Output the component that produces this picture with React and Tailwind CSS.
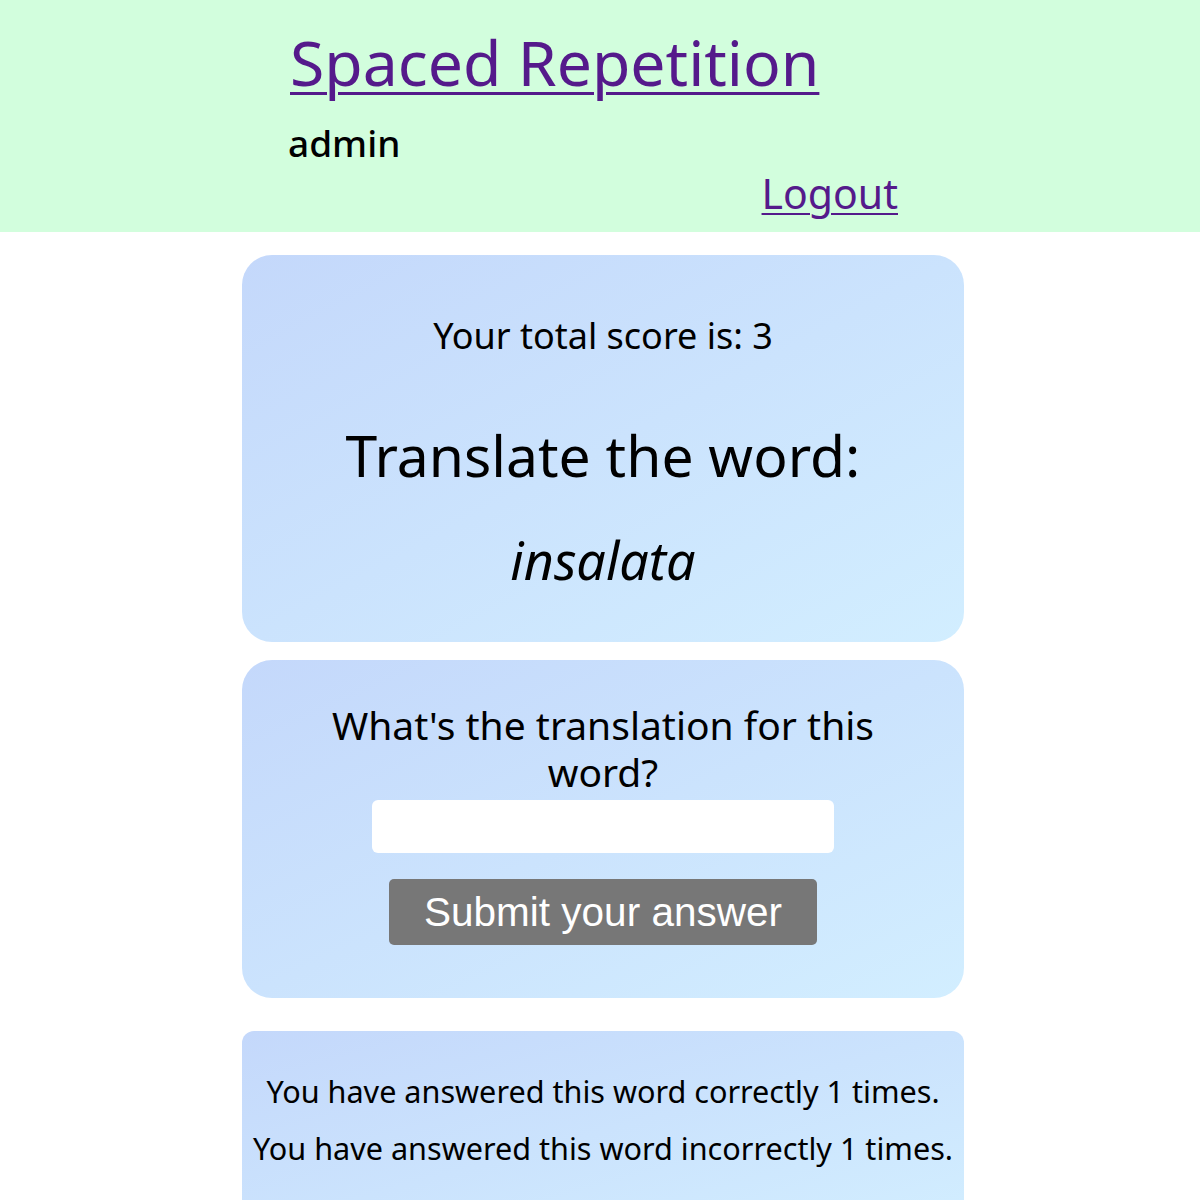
import React, { useState } from 'react';

const App = () => {
  const [answer, setAnswer] = useState('');

  return (
    <div className="min-h-[1200px] bg-white font-['Noto_Sans',sans-serif] text-black">
      <header className="h-[232px] bg-[#d2fedd] pl-[290px] pt-[22px]">
        <h1 className="text-[62.5px] leading-[80px]">
          <a href="#" className="text-[#551a8b] underline decoration-[3px] underline-offset-[6px]">
            Spaced Repetition
          </a>
        </h1>
        <div className="mt-[18px] -ml-[2px] text-[37px] leading-[46px] font-medium">admin</div>
        <div className="w-[608px] mt-[2px] flex justify-end text-[41px] leading-[50px]">
          <a href="#" className="text-[#551a8b] underline decoration-[2px] underline-offset-[4px]">
            Logout
          </a>
        </div>
      </header>

      <main className="w-[722px] ml-[242px] pt-[23px] flex flex-col">
        <section className="h-[387px] rounded-[30px] bg-gradient-to-br from-[#c4d8fb] to-[#d2eeff] text-center pt-[60px]">
          <p className="text-[36px] leading-[42px]">Your total score is: 3</p>
          <h2 className="mt-[63px] text-[57px] leading-[70px]">Translate the word:</h2>
          <p className="mt-[38px] text-[52px] leading-[64px] italic">insalata</p>
        </section>

        <section className="mt-[18px] h-[338px] rounded-[30px] bg-gradient-to-br from-[#c4d8fb] to-[#d2eeff] flex flex-col items-center pt-[41px]">
          <h3 className="w-[600px] text-center text-[39px] leading-[47px]">
            What's the translation for this word?
          </h3>
          <input
            type="text"
            value={answer}
            onChange={(e) => setAnswer(e.target.value)}
            className="mt-[5px] w-[462px] h-[53px] rounded-[6px] bg-white outline-none px-3 text-[24px]"
          />
          <button className="mt-[26px] w-[428px] h-[66px] rounded-[5px] bg-[#777777] text-white text-[40.5px] font-['Liberation_Sans',sans-serif] leading-none">
            Submit your answer
          </button>
        </section>

        <section className="mt-[33px] h-[200px] rounded-[12px] bg-gradient-to-br from-[#c4d8fb] to-[#d2eeff] text-center pt-[40px]">
          <p className="text-[30.6px] leading-[40px]">You have answered this word correctly 1 times.</p>
          <p className="mt-[17px] text-[30.6px] leading-[40px]">You have answered this word incorrectly 1 times.</p>
        </section>
      </main>
    </div>
  );
};

export default App;
